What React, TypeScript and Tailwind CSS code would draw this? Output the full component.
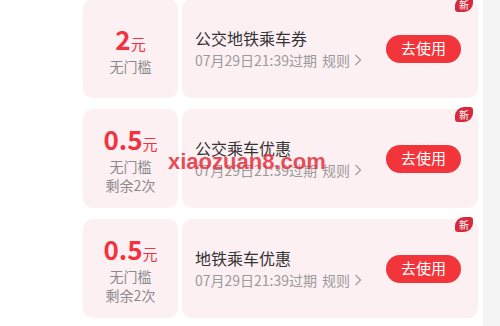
import React from "react";

type Coupon = { amount: string; lines: string[]; title: string };

const coupons: Coupon[] = [
  { amount: "2", lines: ["无门槛"], title: "公交地铁乘车券" },
  { amount: "0.5", lines: ["无门槛", "剩余2次"], title: "公交乘车优惠" },
  { amount: "0.5", lines: ["无门槛", "剩余2次"], title: "地铁乘车优惠" },
];

function Card({ c }: { c: Coupon }) {
  return (
    <div className="flex h-[99px] gap-[4px]">
      <div className="flex w-[95px] flex-col items-center justify-center rounded-[10px] bg-[#fdf0f3] pt-[4px]">
        <div className="flex items-baseline leading-[26px] text-[#f2333f]">
          <span className="text-[26px] font-bold">{c.amount}</span>
          <span className="text-[15px]">元</span>
        </div>
        {c.lines.map((l) => (
          <div key={l} className="text-[14px] leading-[19px] text-[#8a8a8a]">
            {l}
          </div>
        ))}
      </div>
      <div className="relative flex flex-1 items-center rounded-[10px] bg-[#fdf0f3] pl-[13px] pr-[17px]">
        <div className="flex flex-1 flex-col">
          <div className="text-[16px] leading-[22px] text-[#333333]">{c.title}</div>
          <div className="flex items-center text-[14px] leading-[22px] text-[#9a9a9a]">
            <span>07月29日21:39过期</span>
            <span className="ml-[5px]">规则</span>
            <svg width="8" height="12" viewBox="0 0 8 12" className="ml-[4px]">
              <path d="M1.5 1 L6.5 6 L1.5 11" fill="none" stroke="#a0a0a0" strokeWidth="1.3" />
            </svg>
          </div>
        </div>
        <div className="flex h-[28px] w-[75px] items-center justify-center rounded-full bg-[#f2353a] text-[15px] text-white">
          去使用
        </div>
        <div className="absolute right-[5px] top-[-2px] flex h-[15px] w-[18px] items-center justify-center rounded-tl-[9px] rounded-br-[9px] rounded-tr-[3px] rounded-bl-[3px] bg-[#d42a3c] text-[10px] leading-none text-white">
          新
        </div>
      </div>
    </div>
  );
}

export default function App() {
  return (
    <div
      className="relative flex h-[326px] w-[500px] overflow-hidden bg-white"
      style={{ fontFamily: '"Noto Sans CJK SC", "Noto Sans", sans-serif' }}
    >
      <div className="flex flex-1 flex-col gap-[11px] pl-[83px] pr-[5px] mt-[-1px]">
        {coupons.map((c, i) => (
          <Card key={i} c={c} />
        ))}
      </div>
      <div className="w-[17px] bg-[#f4f4f4]" />
      <div
        className="pointer-events-none absolute left-[168px] top-[145px] text-[22px] font-bold text-[#e5303e] opacity-85"
        style={{ fontFamily: '"Liberation Sans", Arial, sans-serif' }}
      >
        xiaozuan8.com
      </div>
    </div>
  );
}
